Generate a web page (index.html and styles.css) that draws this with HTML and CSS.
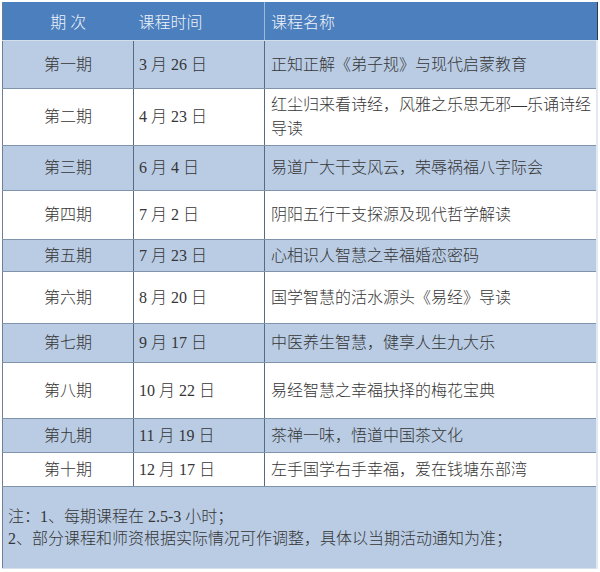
FILE: index.html
```html
<!DOCTYPE html>
<html lang="zh-CN">
<head>
<meta charset="utf-8">
<title>课程安排</title>
<link rel="stylesheet" href="styles.css">
</head>
<body>
<div class="frame">
<table class="schedule">
  <colgroup>
    <col class="c-phase">
    <col class="c-date">
    <col class="c-name">
  </colgroup>
  <thead>
    <tr class="head">
      <th class="phase">期 次</th>
      <th class="date">课程时间</th>
      <th class="name">课程名称</th>
    </tr>
  </thead>
  <tbody>
    <tr class="tint h48"><td class="phase">第一期</td><td class="date">3 月 26 日</td><td class="name">正知正解《弟子规》与现代启蒙教育</td></tr>
    <tr class="plain h57"><td class="phase">第二期</td><td class="date">4 月 23 日</td><td class="name wrap">红尘归来看诗经，风雅之乐思无邪—乐诵诗经导读</td></tr>
    <tr class="tint h45"><td class="phase">第三期</td><td class="date">6 月 4 日</td><td class="name">易道广大干支风云，荣辱祸福八字际会</td></tr>
    <tr class="plain h49"><td class="phase">第四期</td><td class="date">7 月 2 日</td><td class="name">阴阳五行干支探源及现代哲学解读</td></tr>
    <tr class="tint h32"><td class="phase">第五期</td><td class="date">7 月 23 日</td><td class="name">心相识人智慧之幸福婚恋密码</td></tr>
    <tr class="plain h52"><td class="phase">第六期</td><td class="date">8 月 20 日</td><td class="name">国学智慧的活水源头《易经》导读</td></tr>
    <tr class="tint h39"><td class="phase">第七期</td><td class="date">9 月 17 日</td><td class="name">中医养生智慧，健享人生九大乐</td></tr>
    <tr class="plain h56"><td class="phase">第八期</td><td class="date">10 月 22 日</td><td class="name">易经智慧之幸福抉择的梅花宝典</td></tr>
    <tr class="tint h34"><td class="phase">第九期</td><td class="date">11 月 19 日</td><td class="name">茶禅一味，悟道中国茶文化</td></tr>
    <tr class="plain h34"><td class="phase">第十期</td><td class="date">12 月 17 日</td><td class="name">左手国学右手幸福，爱在钱塘东部湾</td></tr>
    <tr class="tint note-row"><td class="note" colspan="3">注：1、每期课程在 2.5-3 小时；<br>2、部分课程和师资根据实际情况可作调整，具体以当期活动通知为准；</td></tr>
  </tbody>
</table>
</div>
</body>
</html>
```

FILE: styles.css
```css
html, body {
  margin: 0;
  padding: 0;
  background: #ffffff;
}

body {
  font-family: "Liberation Serif", "Noto Sans CJK SC", serif;
  font-size: 16px;
  font-weight: 300;
  color: #363636;
}

.frame {
  width: 594px;
  margin: 2px 0 0 2px;
  border-right: 2px solid #2f3a48;
  box-sizing: content-box;
}

.schedule {
  width: 594px;
  border-collapse: collapse;
  table-layout: fixed;
  border-left: 1px solid #6d7f95;
  line-height: 23px;
}

.c-phase { width: 131px; }
.c-date { width: 131px; }
.c-name { width: 332px; }

.schedule th,
.schedule td {
  padding: 0;
  vertical-align: middle;
  text-align: left;
  font-weight: 300;
}

.head {
  height: 38px;
  background: #4c7fbd;
  color: #eef3fa;
}

.head th {
  border-bottom: 1px solid #d3deea;
  padding-top: 3px;
}

.head th.date {
  padding-left: 5px;
}

.head th.name {
  padding-left: 6px;
  border-left: 1px solid #9fb8d6;
}

.schedule td {
  border-bottom: 1px solid #7f93ab;
}

.schedule td.date,
.schedule td.name {
  border-left: 1px solid #566a82;
  padding-left: 5px;
}

.schedule td.name {
  padding-left: 6px;
  padding-right: 4px;
  border-right: 2px solid #e3e9f0;
}

.schedule .phase {
  text-align: center;
}

.tint { background: #b9cce4; }
.plain { background: #ffffff; }

.h32 { height: 32px; }
.h34 { height: 34px; }
.h39 { height: 39px; }
.h45 { height: 45px; }
.h48 { height: 48px; }
.h49 { height: 49px; }
.h52 { height: 52px; }
.h56 { height: 56px; }
.h57 { height: 57px; }

.wrap { line-height: 24px; }

.note-row { height: 82px; }

.schedule td.note {
  padding: 2px 4px 0 5px;
  line-height: 22px;
  border-right: 2px solid #e3e9f0;
  border-bottom: 1px solid #d6e0ec;
}
```
